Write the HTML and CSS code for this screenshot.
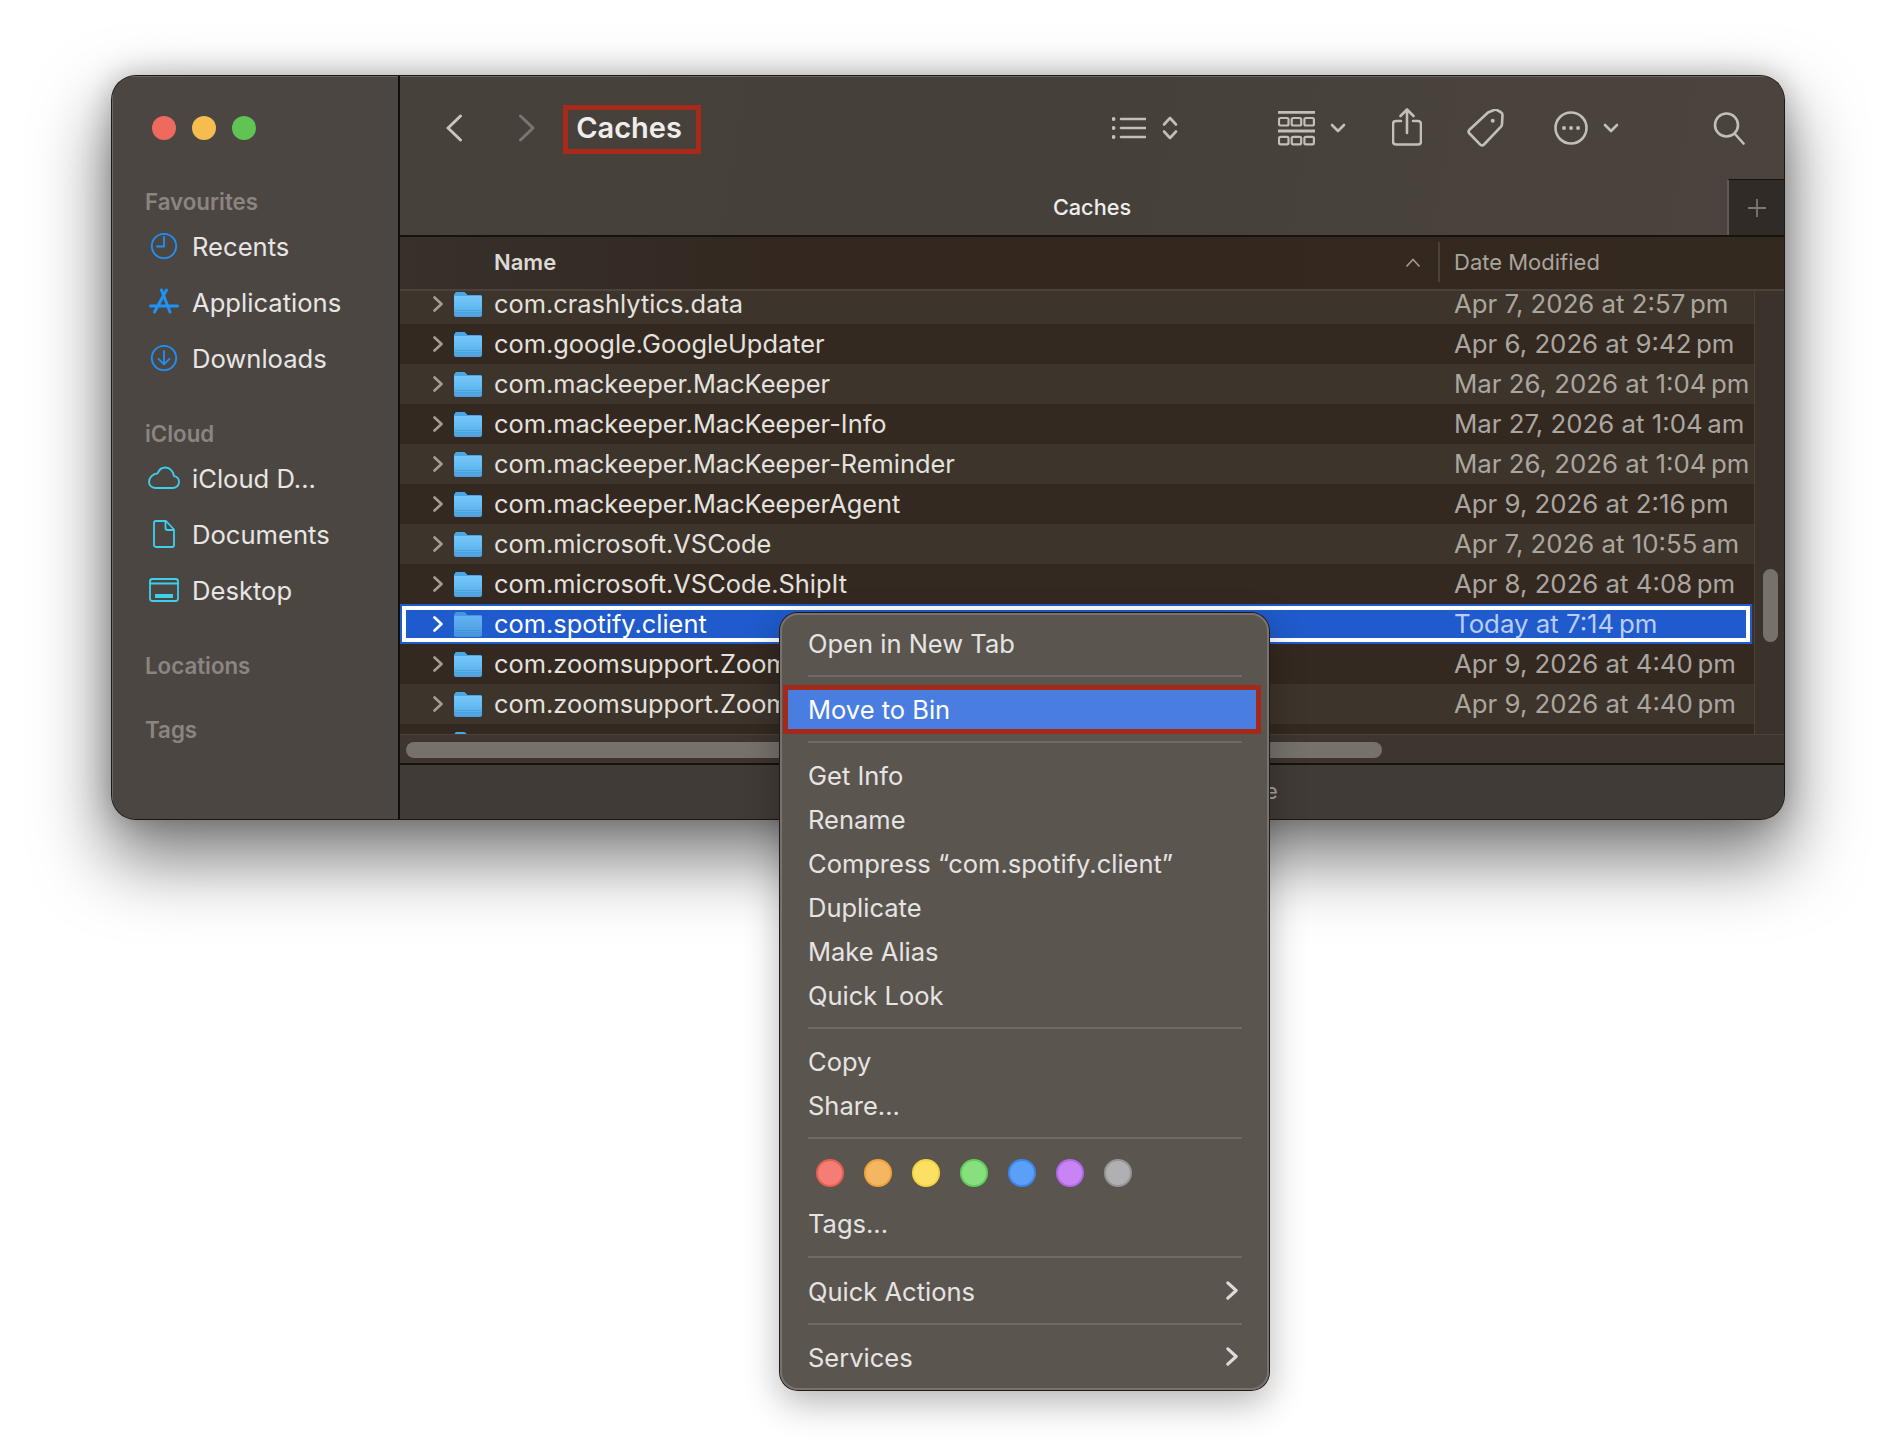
FILE: index.html
```html
<!DOCTYPE html>
<html lang="en">
<head>
    <meta charset="UTF-8">
    <title>Caches</title>
    <link rel="stylesheet" href="styles.css">
</head>
<body>

<svg class="defs" width="0" height="0">
    <defs>
        <linearGradient id="folder-body" x1="0" y1="0" x2="0" y2="1">
            <stop offset="0" stop-color="#75c8fb"/>
            <stop offset="0.7" stop-color="#5cb4ee"/>
            <stop offset="1" stop-color="#4a9fdc"/>
        </linearGradient>
        <symbol id="folder" viewBox="0 0 28 25">
            <path d="M1 1.500C1 .7 1.700 0 2.500 0h7.200c.8 0 1.400.3 2 .9L13.400 3H26.500c.8 0 1.500.7 1.500 1.500V7H0V2.500z" fill="#4ba6e6"/>
            <path d="M0 5.500C0 4.700.7 4 1.500 4h25c.8 0 1.500.7 1.500 1.500V23c0 1.100-.9 2-2 2H2c-1.100 0-2-.9-2-2z" fill="url(#folder-body)"/>
            <path d="M0 18.500h28M0 20.800h28" stroke="#4493cf" stroke-width=".8" opacity=".7"/>
        </symbol>
        <symbol id="chev" viewBox="0 0 10 16">
            <path d="M1.500 1.500 8.500 8l-7 6.500" fill="none" stroke="currentColor" stroke-width="2.600" stroke-linecap="round" stroke-linejoin="round"/>
        </symbol>
    </defs>
</svg>

<div class="window">
    <aside class="sidebar">
        <div class="traffic">
            <span class="light red"></span>
            <span class="light yellow"></span>
            <span class="light green"></span>
        </div>

        <div class="side-label first">Favourites</div>
        <div class="side-item">
            <svg class="side-icon blue" viewBox="0 0 32 32"><circle cx="16" cy="16" r="12.200"/><path d="M16 7v9.500H9"/></svg>
            Recents
        </div>
        <div class="side-item">
            <svg class="side-icon blue" viewBox="0 0 32 32"><path d="M13.500 4 22 26M18.500 4 6.500 26M2.500 20h27" stroke-width="3"/></svg>
            Applications
        </div>
        <div class="side-item">
            <svg class="side-icon blue" viewBox="0 0 32 32"><circle cx="16" cy="16" r="12.200"/><path d="M16 9v13M10.500 16.800 16 22.300l5.500-5.500"/></svg>
            Downloads
        </div>

        <div class="side-label">iCloud</div>
        <div class="side-item">
            <svg class="side-icon cyan" viewBox="0 0 32 32"><path d="M8 26h16.500c3.800 0 6.500-2.700 6.500-6 0-3-2.100-5.300-5-5.800C25.400 9.300 21.800 5.500 17.500 5.500c-3.500 0-6.500 2.300-7.800 5.800C5 11.500 1 15.500 1 20c0 3.500 3 6 7 6z"/></svg>
            iCloud D...
        </div>
        <div class="side-item">
            <svg class="side-icon cyan" viewBox="0 0 32 32"><path d="M8 3h10l8 8.500V27c0 1.200-.8 2-2 2H8c-1.200 0-2-.8-2-2V5c0-1.200.8-2 2-2zM17.500 3.500V10c0 1.200.8 2 2 2h6"/></svg>
            Documents
        </div>
        <div class="side-item">
            <svg class="side-icon cyan" viewBox="0 0 32 32"><rect x="2" y="5" width="28" height="22" rx="2.500"/><path d="M2 9.500h28"/><rect class="solid" x="7" y="20" width="18" height="4"/></svg>
            Desktop
        </div>

        <div class="side-label locations">Locations</div>
        <div class="side-label tags">Tags</div>
    </aside>

    <main class="main">
        <div class="toolbar">
            <div class="title-row">
                <svg class="tool-icon back" viewBox="0 0 18 28"><path d="M15.500 2 3 14l12.500 12"/></svg>
                <svg class="tool-icon forward" viewBox="0 0 18 28"><path d="M2.500 2 15 14 2.500 26"/></svg>
                <h1 class="title">Caches</h1>
                <svg class="tool-icon view-list" viewBox="0 0 34 22"><path d="M9 2h25M9 11h25M9 20h25"/><path class="dot" d="M1.500 2h.1M1.500 11h.1M1.500 20h.1"/></svg>
                <svg class="tool-icon updown" viewBox="0 0 16 26"><path d="M2 9.500 8 3l6 6.500M2 16.500 8 23l6-6.500"/></svg>
                <svg class="tool-icon group" viewBox="0 0 37 35">
                    <path d="M0 1.200h37M0 20h37" />
                    <rect class="thin" x="1" y="7" width="9.500" height="7.500" rx="1.500"/>
                    <rect class="thin" x="13.700" y="7" width="9.500" height="7.500" rx="1.500"/>
                    <rect class="thin" x="26.400" y="7" width="9.500" height="7.500" rx="1.500"/>
                    <rect class="thin" x="1" y="25.800" width="9.500" height="7.500" rx="1.500"/>
                    <rect class="thin" x="13.700" y="25.800" width="9.500" height="7.500" rx="1.500"/>
                    <rect class="thin" x="26.400" y="25.800" width="9.500" height="7.500" rx="1.500"/>
                </svg>
                <svg class="tool-icon caret group-caret" viewBox="0 0 16 10"><path d="M2 2l6 6 6-6"/></svg>
                <svg class="tool-icon share" viewBox="0 0 30 38"><path d="M9 13H4c-1.700 0-3 1.300-3 3v17.500c0 1.700 1.300 3 3 3h22c1.700 0 3-1.300 3-3V16c0-1.700-1.300-3-3-3h-5M15 25V2M8.500 8 15 1.500 21.500 8"/></svg>
                <svg class="tool-icon tag" viewBox="0 0 37 38"><path d="M21 3.500l6-2.500q1.500-.5 3 0l3.500 2q2 1.200 2 3l-.5 9q0 1.500-1 2.700L17 35.500q-1.800 1.800-3.500.3L2.500 24.500q-1.800-1.800-.3-3.500z"/><circle class="solid" cx="25.700" cy="11.700" r="2"/></svg>
                <svg class="tool-icon more" viewBox="0 0 34 34"><circle cx="17" cy="17" r="15.500"/><path class="dot" d="M10 17h.1M17 17h.1M24 17h.1"/></svg>
                <svg class="tool-icon caret more-caret" viewBox="0 0 16 10"><path d="M2 2l6 6 6-6"/></svg>
                <svg class="tool-icon search" viewBox="0 0 32 33"><circle cx="13.500" cy="13" r="11.500"/><path d="M22 22l8.500 9.500"/></svg>
            </div>
            <div class="tab-row">
                <div class="tab">Caches</div>
                <div class="tab-add"><svg viewBox="0 0 20 20"><path d="M10 1v18M1 10h18"/></svg></div>
            </div>
        </div>

        <div class="list-head">
            <span class="head-name">Name</span>
            <svg class="sort" viewBox="0 0 16 10"><path d="M1.500 8.500 8 1.500l6.500 7"/></svg>
            <span class="head-date">Date Modified</span>
        </div>

        <div class="file-list">
            <div class="rows">
                <div class="row"><svg class="chev"><use href="#chev"/></svg><svg class="folder"><use href="#folder"/></svg><span class="name">com.crashlytics.data</span><span class="date">Apr 7, 2026 at 2:57&#8239;pm</span></div>
                <div class="row"><svg class="chev"><use href="#chev"/></svg><svg class="folder"><use href="#folder"/></svg><span class="name">com.google.GoogleUpdater</span><span class="date">Apr 6, 2026 at 9:42&#8239;pm</span></div>
                <div class="row"><svg class="chev"><use href="#chev"/></svg><svg class="folder"><use href="#folder"/></svg><span class="name">com.mackeeper.MacKeeper</span><span class="date">Mar 26, 2026 at 1:04&#8239;pm</span></div>
                <div class="row"><svg class="chev"><use href="#chev"/></svg><svg class="folder"><use href="#folder"/></svg><span class="name">com.mackeeper.MacKeeper-Info</span><span class="date">Mar 27, 2026 at 1:04&#8239;am</span></div>
                <div class="row"><svg class="chev"><use href="#chev"/></svg><svg class="folder"><use href="#folder"/></svg><span class="name">com.mackeeper.MacKeeper-Reminder</span><span class="date">Mar 26, 2026 at 1:04&#8239;pm</span></div>
                <div class="row"><svg class="chev"><use href="#chev"/></svg><svg class="folder"><use href="#folder"/></svg><span class="name">com.mackeeper.MacKeeperAgent</span><span class="date">Apr 9, 2026 at 2:16&#8239;pm</span></div>
                <div class="row"><svg class="chev"><use href="#chev"/></svg><svg class="folder"><use href="#folder"/></svg><span class="name">com.microsoft.VSCode</span><span class="date">Apr 7, 2026 at 10:55&#8239;am</span></div>
                <div class="row"><svg class="chev"><use href="#chev"/></svg><svg class="folder"><use href="#folder"/></svg><span class="name">com.microsoft.VSCode.ShipIt</span><span class="date">Apr 8, 2026 at 4:08&#8239;pm</span></div>
                <div class="row selected"><svg class="chev"><use href="#chev"/></svg><svg class="folder"><use href="#folder"/></svg><span class="name">com.spotify.client</span><span class="date">Today at 7:14&#8239;pm</span></div>
                <div class="row"><svg class="chev"><use href="#chev"/></svg><svg class="folder"><use href="#folder"/></svg><span class="name">com.zoomsupport.Zoom</span><span class="date">Apr 9, 2026 at 4:40&#8239;pm</span></div>
                <div class="row"><svg class="chev"><use href="#chev"/></svg><svg class="folder"><use href="#folder"/></svg><span class="name">com.zoomsupport.Zoom</span><span class="date">Apr 9, 2026 at 4:40&#8239;pm</span></div>
                <div class="row"><span class="chev"></span><svg class="folder"><use href="#folder"/></svg></div>
            </div>
            <div class="v-track"><div class="v-thumb"></div></div>
        </div>

        <div class="h-track"><div class="h-thumb"></div></div>
        <div class="status">1 of 86 selected, 238.21 GB available</div>
    </main>
</div>

<div class="menu">
    <div class="menu-item">Open in New Tab</div>
    <div class="menu-sep"></div>
    <div class="menu-item active"><span class="active-fill">Move to Bin</span></div>
    <div class="menu-sep"></div>
    <div class="menu-item">Get Info</div>
    <div class="menu-item">Rename</div>
    <div class="menu-item">Compress “com.spotify.client”</div>
    <div class="menu-item">Duplicate</div>
    <div class="menu-item">Make Alias</div>
    <div class="menu-item">Quick Look</div>
    <div class="menu-sep"></div>
    <div class="menu-item">Copy</div>
    <div class="menu-item">Share...</div>
    <div class="menu-sep"></div>
    <div class="tag-dots">
        <span class="tag-dot t-red"></span>
        <span class="tag-dot t-orange"></span>
        <span class="tag-dot t-yellow"></span>
        <span class="tag-dot t-green"></span>
        <span class="tag-dot t-blue"></span>
        <span class="tag-dot t-purple"></span>
        <span class="tag-dot t-grey"></span>
    </div>
    <div class="menu-item">Tags...</div>
    <div class="menu-sep tall"></div>
    <div class="menu-item">Quick Actions<svg class="menu-chev"><use href="#chev"/></svg></div>
    <div class="menu-sep"></div>
    <div class="menu-item">Services<svg class="menu-chev"><use href="#chev"/></svg></div>
</div>

</body>
</html>
```

FILE: styles.css
```css
body {
    font-family: Inter, "Liberation Sans", sans-serif;
    margin: 0;
    padding: 76px 0 0 112px;
    height: 1444px;
    box-sizing: border-box;
    overflow: hidden;
    background-color: #fff;
    position: relative;
}

.defs {
    position: absolute;
}

.window {
    width: 1672px;
    height: 743px;
    display: flex;
    border-radius: 24px;
    overflow: hidden;
    background-color: #4c4643;
    box-shadow: 0 0 0 1px #1b1816, 0 36px 70px 6px rgba(0, 0, 0, 0.5), 0 0 30px rgba(0, 0, 0, 0.25);
}

/* Sidebar */
.sidebar {
    width: 288px;
    flex-shrink: 0;
    background-color: #4c4643;
    border-right: 2px solid #100e0d;
    box-sizing: border-box;
    padding-left: 33px;
    color: #e8e6e4;
    box-shadow: inset 1px 1px 0 #6c6764;
}

.traffic {
    display: flex;
    gap: 16px;
    padding-top: 40px;
    margin-left: 7px;
    height: 24px;
    margin-bottom: 48px;
}

.light {
    width: 24px;
    height: 24px;
    border-radius: 50%;
}

.red { background-color: #ee6a5e; }
.yellow { background-color: #f5bd4f; }
.green { background-color: #5fc454; }

.side-label {
    font-size: 22.300px;
    font-weight: 600;
    color: #8b8580;
    line-height: 28px;
    margin-top: 34px;
    margin-bottom: 2px;
}

.side-label.first {
    margin-top: 0;
}

.side-label.locations {
    margin-top: 34px;
    margin-bottom: 0;
}

.side-label.tags {
    margin-top: 36px;
}

.side-item {
    display: flex;
    align-items: center;
    height: 56px;
    font-size: 25.600px;
    margin-left: 3px;
}

.side-icon {
    width: 32px;
    height: 32px;
    margin-right: 12px;
    fill: none;
    stroke-width: 1.800;
    stroke-linecap: round;
    stroke-linejoin: round;
    flex-shrink: 0;
}

.side-icon.blue { stroke: #1e92f7; }
.side-icon.cyan { stroke: #3dd0ee; }
.side-icon .solid { fill: #3dd0ee; stroke: none; }

/* Main column */
.main {
    flex: 1;
    min-width: 0;
    display: flex;
    flex-direction: column;
}

.toolbar {
    height: 161px;
    flex-shrink: 0;
    box-sizing: border-box;
    background: linear-gradient(100deg, #47413c 0%, #46403b 50%, #4b433e 100%);
    border-bottom: 2px solid #151210;
    box-shadow: inset 0 1px 0 #6c6764;
}

.title-row {
    height: 104px;
    display: flex;
    align-items: center;
    box-sizing: border-box;
}

.tool-icon {
    fill: none;
    stroke: #c4beb8;
    stroke-width: 2.600;
    stroke-linecap: round;
    stroke-linejoin: round;
    flex-shrink: 0;
}

.tool-icon .thin { stroke-width: 2.200; }
.tool-icon .solid { fill: #c4beb8; stroke: none; }
.tool-icon .dot { stroke-width: 3.800; }

.back { width: 18px; height: 28px; margin-left: 45px; stroke: #c9c4be; stroke-width: 3; }
.forward { width: 18px; height: 28px; margin-left: 55px; stroke: #7a7570; stroke-width: 3; }

.title {
    margin: 3px 0 0 27px;
    width: 122px;
    height: 39px;
    padding-right: 6px;
    border: 5px solid #a92a1a;
    box-sizing: content-box;
    color: #efedeb;
    font-size: 29px;
    font-weight: 600;
    line-height: 36px;
    text-align: center;
}

.view-list { width: 34px; height: 22px; margin-left: 411px; }
.updown { width: 16px; height: 26px; margin-left: 16px; }
.group { width: 37px; height: 35px; margin-left: 100px; stroke-width: 3; }
.group-caret { width: 16px; height: 10px; margin-left: 15px; }
.share { width: 30px; height: 38px; margin-left: 46px; margin-top: -2px; }
.tag { width: 37px; height: 38px; margin-left: 45px; }
.more { width: 34px; height: 34px; margin-left: 50px; }
.more-caret { width: 16px; height: 10px; margin-left: 15px; }
.search { width: 32px; height: 33px; margin-left: 94px; }

.tab-row {
    height: 55px;
    display: flex;
}

.tab {
    flex: 1;
    text-align: center;
    color: #efedeb;
    font-size: 21.700px;
    font-weight: 500;
    line-height: 54px;
    padding-left: 57px;
}

.tab-add {
    width: 57px;
    margin-top: -1px;
    background-color: #302b27;
    border-left: 2px solid #5f5a55;
    border-top: 1px solid #151210;
    box-sizing: border-box;
    display: flex;
    align-items: center;
    justify-content: center;
}

.tab-add svg {
    width: 20px;
    height: 20px;
    fill: none;
    stroke: #7d7872;
    stroke-width: 1.800;
}

.list-head {
    height: 54px;
    flex-shrink: 0;
    display: flex;
    align-items: center;
    background: linear-gradient(90deg, #37302b 0%, #33271f 30%, #34291f 100%);
    border-bottom: 2px solid #4b423b;
    padding-bottom: 3px;
    box-sizing: border-box;
    font-size: 22px;
    color: #a9a49e;
}

.head-name {
    margin-left: 94px;
    font-weight: 600;
    color: #dcd9d6;
    flex: 1;
}

.sort {
    width: 16px;
    height: 10px;
    fill: none;
    stroke: #a09a93;
    stroke-width: 1.600;
    margin-right: 17px;
    margin-top: 2px;
}

.head-date {
    width: 346px;
    height: 40px;
    line-height: 40px;
    border-left: 2px solid #4b423b;
    box-sizing: border-box;
    padding-left: 14px;
}

.file-list {
    height: 443px;
    flex-shrink: 0;
    display: flex;
    background-color: #3b322b;
    overflow: hidden;
}

.rows {
    flex: 1;
    min-width: 0;
    margin-top: -7px;
    border-right: 1px solid #4b423b;
    overflow: hidden;
}

.row {
    height: 40px;
    display: flex;
    align-items: center;
    font-size: 25.400px;
    color: #e4e1de;
    box-sizing: border-box;
    white-space: nowrap;
}

.row:nth-child(odd) { background-color: #3d342c; }
.row:nth-child(even) { background-color: #332921; }

.chev {
    width: 10px;
    height: 16px;
    margin-left: 33px;
    color: #a39d96;
    flex-shrink: 0;
}

.folder {
    width: 28px;
    height: 25px;
    margin-left: 11px;
    flex-shrink: 0;
}

.name {
    margin: -2px 0 0 12px;
    flex: 1;
}

.date {
    width: 300px;
    margin-top: -2px;
    font-size: 25.800px;
    color: #aba69f;
    flex-shrink: 0;
}

.row.selected {
    background-color: #1f5bcc;
    border: 2px solid #1f5bcc;
    box-shadow: inset 0 0 0 4px #fff;
    margin-right: 2px;
    color: #fff;
}

.row.selected .chev {
    margin-left: 31px;
    color: #fff;
}

.row.selected .date {
    width: 296px;
    color: #b9ccf5;
}

.row.selected .folder {
    opacity: 0.8;
}

.v-track {
    width: 29px;
    flex-shrink: 0;
    background-color: #3b322b;
    padding: 0 6px 0 8px;
    box-sizing: border-box;
}

.v-thumb {
    margin-top: 278px;
    height: 73px;
    border-radius: 8px;
    background-color: #76716b;
}

.h-track {
    height: 31px;
    flex-shrink: 0;
    box-sizing: border-box;
    background-color: #3e352e;
    border-top: 1px solid #4b423b;
    border-bottom: 2px solid #151210;
    padding: 7px 0 0 6px;
}

.h-thumb {
    width: 976px;
    height: 16px;
    border-radius: 8px;
    background-color: #76716b;
}

.status {
    flex: 1;
    background-color: #413b37;
    text-align: center;
    color: #aaa5a0;
    font-size: 21.500px;
    line-height: 52px;
}

/* Context menu */
.menu {
    position: absolute;
    left: 780px;
    top: 613px;
    width: 489px;
    height: 777px;
    box-sizing: border-box;
    padding-top: 8px;
    background-color: #5b5550;
    border-radius: 18px;
    box-shadow: inset 0 0 0 2px #77726e, 0 0 0 1px #1e1b19, 0 12px 36px rgba(0, 0, 0, 0.3);
    color: #e6e4e2;
    font-size: 25.500px;
}

.menu-item {
    height: 44px;
    display: flex;
    align-items: center;
    padding-left: 28px;
    position: relative;
}

.menu-sep {
    height: 22px;
    position: relative;
}

.menu-sep.tall {
    height: 24px;
}

.menu-sep.tall::after {
    top: 11px;
}

.menu-sep::after {
    content: "";
    position: absolute;
    left: 28px;
    right: 27px;
    top: 10px;
    height: 2px;
    background-color: #706b66;
}

.menu-item.active {
    padding-left: 0;
    color: #fff;
}

.active-fill {
    position: absolute;
    left: 3px;
    right: 8px;
    top: -2px;
    height: 39px;
    box-sizing: content-box;
    border: 5px solid #a32a1a;
    background-color: #4a7de0;
    padding-left: 20px;
    line-height: 39px;
}

.tag-dots {
    height: 46px;
    margin-top: 1px;
    margin-bottom: 5px;
    display: flex;
    align-items: center;
    gap: 20px;
    padding-left: 36px;
}

.tag-dot {
    width: 28px;
    height: 28px;
    border-radius: 50%;
    box-sizing: border-box;
    border: 2px solid;
}

.t-red { background-color: #f47d75; border-color: #e5604f; }
.t-orange { background-color: #f4b661; border-color: #f0a23c; }
.t-yellow { background-color: #fbe064; border-color: #f5d342; }
.t-green { background-color: #87e07e; border-color: #62cf5a; }
.t-blue { background-color: #5ba0f8; border-color: #3c86ee; }
.t-purple { background-color: #c884f4; border-color: #b268e8; }
.t-grey { background-color: #b0afb2; border-color: #969598; }

.menu-chev {
    position: absolute;
    left: 446px;
    top: 12px;
    width: 12px;
    height: 19px;
    color: #dedbd8;
}
```
